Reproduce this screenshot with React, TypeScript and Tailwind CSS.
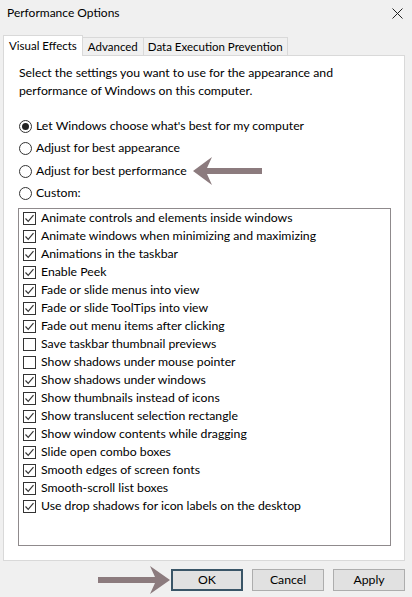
import React from 'react';

const effects: { label: string; on: boolean }[] = [
  { label: 'Animate controls and elements inside windows', on: true },
  { label: 'Animate windows when minimizing and maximizing', on: true },
  { label: 'Animations in the taskbar', on: true },
  { label: 'Enable Peek', on: true },
  { label: 'Fade or slide menus into view', on: true },
  { label: 'Fade or slide ToolTips into view', on: true },
  { label: 'Fade out menu items after clicking', on: true },
  { label: 'Save taskbar thumbnail previews', on: false },
  { label: 'Show shadows under mouse pointer', on: false },
  { label: 'Show shadows under windows', on: true },
  { label: 'Show thumbnails instead of icons', on: true },
  { label: 'Show translucent selection rectangle', on: true },
  { label: 'Show window contents while dragging', on: true },
  { label: 'Slide open combo boxes', on: true },
  { label: 'Smooth edges of screen fonts', on: true },
  { label: 'Smooth-scroll list boxes', on: true },
  { label: 'Use drop shadows for icon labels on the desktop', on: true },
];

const radios = [
  { label: "Let Windows choose what's best for my computer", on: true, h: 'h-[22px]' },
  { label: 'Adjust for best appearance', on: false, h: 'h-[23px]' },
  { label: 'Adjust for best performance', on: false, h: 'h-[22px]' },
  { label: 'Custom:', on: false, h: 'h-[22px]' },
];

const Radio = ({ on }: { on: boolean }) => (
  <span className="w-[13px] h-[13px] rounded-full border border-[#333] bg-white flex items-center justify-center shrink-0">
    {on && <span className="w-[7px] h-[7px] rounded-full bg-[#222]" />}
  </span>
);

const Check = ({ on }: { on: boolean }) => (
  <span className="w-[13px] h-[13px] border border-[#333] bg-white flex items-center justify-center shrink-0">
    {on && (
      <svg width="11" height="11" viewBox="0 0 11 11">
        <path d="M1.5 5.5 L4.2 8.3 L9.5 2.2" fill="none" stroke="#333" strokeWidth="1.2" />
      </svg>
    )}
  </span>
);

const App = () => {
  return (
    <div
      className="relative w-[412px] h-[597px] bg-[#f0f0f0] overflow-hidden text-[12.25px] text-black"
      style={{ fontFamily: 'Lato, "Noto Sans", sans-serif' }}
    >
      {/* Title bar */}
      <div className="h-[35px] flex items-start justify-between pl-[7px] pr-[9px] pt-[4px]">
        <span className="text-[12px] leading-[18px]">Performance Options</span>
        <svg width="11" height="11" viewBox="0 0 11 11" className="mt-[4px]">
          <path d="M0.5 0.5 L10.5 10.5 M10.5 0.5 L0.5 10.5" stroke="#222" strokeWidth="1" />
        </svg>
      </div>

      {/* Tabs */}
      <div className="flex items-end h-[20px] pl-[3px] text-[11.5px]">
        <div className="relative z-10 h-[21px] -mb-px px-[5px] bg-white border border-b-0 border-[#d9d9d9] leading-[19px]">
          Visual Effects
        </div>
        <div className="h-[18px] px-[5px] border border-l-0 border-b-0 border-[#d9d9d9] leading-[17px]">Advanced</div>
        <div className="h-[18px] px-[4px] border border-l-0 border-b-0 border-[#d9d9d9] leading-[17px]">
          Data Execution Prevention
        </div>
      </div>

      {/* Panel */}
      <div className="ml-[3px] w-[402px] h-[506px] bg-white border border-[#d9d9d9] px-[14px] pt-[8px]">
        <p className="leading-[18px] pl-px">
          Select the settings you want to use for the appearance and
          <br />
          performance of Windows on this computer.
        </p>

        <div className="mt-[15px] flex flex-col pl-px">
          {radios.map((r) => (
            <div key={r.label} className={`flex items-center gap-[4px] ${r.h}`}>
              <Radio on={r.on} />
              <span>{r.label}</span>
            </div>
          ))}
        </div>

        <div className="mt-[4px] w-[373px] h-[338px] border border-[#8f8a8c] pl-[4px]">
          {effects.map((e) => (
            <div key={e.label} className="h-[18px] flex items-center gap-[5px]">
              <Check on={e.on} />
              <span>{e.label}</span>
            </div>
          ))}
        </div>
      </div>

      {/* Buttons */}
      <div className="flex justify-end gap-[9px] pr-[7px] pt-[8px]">
        <button className="w-[72px] h-[22px] bg-[#e1e1e1] border-2 border-[#3a5567]">OK</button>
        <button className="w-[72px] h-[22px] bg-[#e1e1e1] border border-[#adadad]">Cancel</button>
        <button className="w-[72px] h-[22px] bg-[#e1e1e1] border border-[#adadad]">Apply</button>
      </div>

      {/* Annotation arrows */}
      <svg className="absolute left-0 top-0 pointer-events-none" width="412" height="597" viewBox="0 0 412 597">
        <path d="M193 171 L212 157 L207 168 L262 168 L262 174 L207 174 L212 185 Z" fill="#8c7b7e" />
        <path d="M170 580 L150 566 L155 577 L98 577 L98 583 L155 583 L150 594 Z" fill="#8c7b7e" />
      </svg>
    </div>
  );
};

export default App;
